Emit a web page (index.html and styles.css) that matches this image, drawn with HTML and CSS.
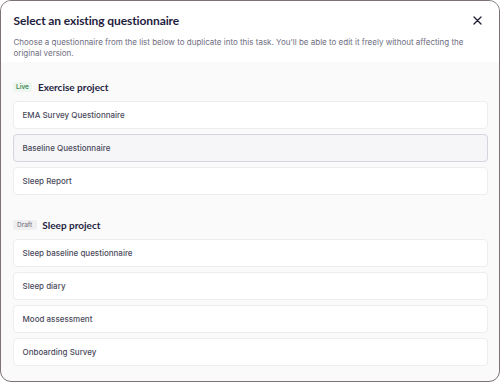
FILE: index.html
```html
<!DOCTYPE html>
<html lang="en">
<head>
<meta charset="utf-8">
<title>Select an existing questionnaire</title>
<link rel="stylesheet" href="styles.css">
</head>
<body>
<div class="modal">
  <div class="header">
    <div class="title-row">
      <h1 class="title">Select an existing questionnaire</h1>
      <button class="close" aria-label="Close">
        <svg width="9" height="9" viewBox="0 0 9 9"><path d="M1 1L8 8M8 1L1 8" stroke="#1f1d33" stroke-width="1.3" stroke-linecap="round"/></svg>
      </button>
    </div>
    <p class="desc">Choose a questionnaire from the list below to duplicate into this task. You'll be able to edit it freely without affecting the original version.</p>
  </div>
  <div class="body">
    <section class="group">
      <div class="group-head"><span class="badge badge-live">Live</span><span class="group-name">Exercise project</span></div>
      <div class="list">
        <div class="item">EMA Survey Questionnaire</div>
        <div class="item item-active">Baseline Questionnaire</div>
        <div class="item">Sleep Report</div>
      </div>
    </section>
    <section class="group">
      <div class="group-head"><span class="badge badge-draft">Draft</span><span class="group-name">Sleep project</span></div>
      <div class="list">
        <div class="item">Sleep baseline questionnaire</div>
        <div class="item">Sleep diary</div>
        <div class="item">Mood assessment</div>
        <div class="item">Onboarding Survey</div>
      </div>
    </section>
  </div>
</div>
</body>
</html>
```
FILE: styles.css
```css
* { box-sizing: border-box; }
html, body { margin: 0; padding: 0; background: #ffffff; }
body { font-family: Inter, "Liberation Sans", sans-serif; }
.modal {
  width: 500px;
  height: 382px;
  border: 1.5px solid #7b7373;
  border-radius: 11px;
  overflow: hidden;
  background: #fafafa;
  display: flex;
  flex-direction: column;
}
.header {
  background: #ffffff;
  padding: 11.5px 13px 3.5px 12.5px;
}
.title-row {
  display: flex;
  justify-content: space-between;
  align-items: center;
  height: 16px;
}
.title {
  margin: 0;
  font-family: Lato, Inter, sans-serif;
  font-size: 12px;
  font-weight: 700;
  letter-spacing: -0.1px;
  color: #1f1d3d;
  line-height: 16px;
}
.close {
  border: 0;
  background: none;
  padding: 0;
  width: 9px;
  height: 9px;
  display: flex;
  margin-right: 4.5px;
}
.desc {
  margin: 8.5px 0 0;
  font-size: 8px;
  line-height: 10.5px;
  color: #6e6d80;
}
.body {
  padding: 19px 11.5px 0 11.5px;
  display: flex;
  flex-direction: column;
  gap: 24px;
}
.group-head {
  display: flex;
  align-items: center;
  height: 12px;
  gap: 5.5px;
  margin-bottom: 8px;
}
.badge {
  font-size: 6.5px;
  font-weight: 600;
  height: 10px;
  line-height: 10px;
  padding: 0 3.5px;
  border-radius: 2px;
}
.badge-live { background: #edf6ef; color: #3d8b55; }
.badge-draft { background: #efeff1; color: #7a7a86; font-weight: 500; padding: 0 4.5px; }
.group-name {
  font-family: Lato, Inter, sans-serif;
  font-size: 10px;
  font-weight: 700;
  color: #25233f;
}
.list {
  display: flex;
  flex-direction: column;
  gap: 5px;
}
.item {
  height: 28px;
  display: flex;
  align-items: center;
  padding: 0 9px;
  background: #ffffff;
  border: 1px solid #ededf0;
  border-radius: 4px;
  font-size: 8px;
  font-weight: 500;
  color: #4b4a5c;
}
.item-active {
  background: #f6f6f9;
  border-color: #d6d6de;
}
```
